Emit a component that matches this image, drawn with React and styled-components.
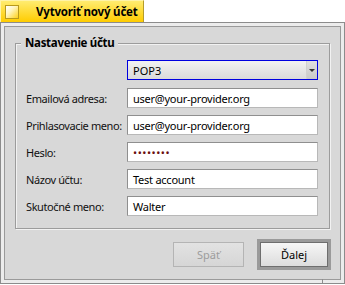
import React from 'react'
import styled, { createGlobalStyle } from 'styled-components'

const GlobalStyle = createGlobalStyle`
  html, body {
    margin: 0;
    padding: 0;
    background: #ffffff;
  }
  body {
    font-family: "Noto Sans", "DejaVu Sans", sans-serif;
    font-size: 11px;
    color: #000;
  }
`

const Page = styled.div`
  width: 345px;
  height: 285px;
  display: flex;
  flex-direction: column;
`

const Tab = styled.div`
  width: 144px;
  height: 22px;
  box-sizing: border-box;
  border: 1px solid #b59c2a;
  border-bottom: none;
  border-left-color: #fff3a8;
  border-top-color: #fff3a8;
  background: linear-gradient(#ffec70, #ffcc00);
  display: flex;
  align-items: center;
  padding-left: 4px;
  gap: 17px;
  white-space: nowrap;
`

const CloseBox = styled.div`
  width: 14px;
  height: 14px;
  flex: none;
  box-sizing: border-box;
  border: 1px solid #b89a1c;
  background: linear-gradient(135deg, #ffffff 0%, #fff6c0 40%, #ffd21a 100%);
`

const TabTitle = styled.span`
  font-weight: bold;
  font-size: 11.5px;
  letter-spacing: -0.2px;
`

const Frame = styled.div`
  flex: 1;
  position: relative;
  box-sizing: border-box;
  border: 1px solid #8c8c8c;
  background: #ececec;
  padding: 3px;
  margin-bottom: 1px;
  display: flex;

  &::after {
    content: '';
    position: absolute;
    right: 21px;
    bottom: -1px;
    width: 1px;
    height: 5px;
    background: #8c8c8c;
  }
`

const Content = styled.div`
  flex: 1;
  box-sizing: border-box;
  border: 1px solid #9a9a9a;
  background: #d8d8d8;
  padding: 16px 9px 9px 10px;
  display: flex;
  flex-direction: column;
`

const Group = styled.div`
  border: 1px solid #9c9c9c;
  box-shadow: 1px 1px 0 #f2f2f2 inset, 1px 1px 0 #f2f2f2;
  padding: 16px 11px 12px 10px;
  height: 186px;
  box-sizing: border-box;
  position: relative;
  margin-right: 1px;
`

const Legend = styled.span`
  position: absolute;
  top: -8px;
  left: 5px;
  padding: 0 4px;
  background: #d8d8d8;
  font-weight: bold;
  font-size: 11.5px;
  line-height: 14px;
  letter-spacing: -0.3px;
`

const Grid = styled.div`
  display: grid;
  grid-template-columns: 101px 1fr;
  row-gap: 7px;
  align-items: center;
`

const Label = styled.label`
  font-size: 11px;
  color: #111;
  white-space: nowrap;
  letter-spacing: -0.4px;
`

const Popup = styled.div`
  grid-column: 2;
  height: 20px;
  box-sizing: border-box;
  border: 1px solid #0000e0;
  background: linear-gradient(#f2f2f2, #dadada);
  display: flex;
  align-items: stretch;
  margin-bottom: 1px;
`

const PopupText = styled.span`
  flex: 1;
  padding-left: 5px;
  display: flex;
  align-items: center;
  font-size: 11px;
`

const PopupArrow = styled.span`
  width: 10px;
  background: linear-gradient(#e0e0e0, #c8c8c8);
  border-left: 1px solid #d0d0d0;
  display: flex;
  align-items: center;
  justify-content: center;

  &::before {
    content: '';
    border-left: 3px solid transparent;
    border-right: 3px solid transparent;
    border-top: 3px solid #333;
  }
`

const Field = styled.div`
  height: 20px;
  box-sizing: border-box;
  border: 1px solid #8f8f8f;
  border-right-color: #b8b8b8;
  border-bottom-color: #b8b8b8;
  background: #ffffff;
  padding-left: 5px;
  display: flex;
  align-items: center;
  font-size: 11px;
  white-space: nowrap;
  color: ${p => (p.$secret ? '#6b1010' : '#000')};
  letter-spacing: ${p => (p.$secret ? '0.5px' : '-0.25px')};
`

const Buttons = styled.div`
  margin-top: auto;
  display: flex;
  justify-content: flex-end;
  align-items: center;
  gap: 13px;
`

const Button = styled.button`
  width: ${p => p.$w}px;
  height: 25px;
  box-sizing: border-box;
  font-family: inherit;
  font-size: 11px;
  padding: 0;
  border: 1px solid ${p => (p.disabled ? '#b4b4b4' : '#6e6e6e')};
  color: ${p => (p.disabled ? '#9c9c9c' : '#000')};
  background: ${p =>
    p.disabled
      ? 'linear-gradient(#e2e2e2, #d6d6d6)'
      : 'linear-gradient(#f6f6f6, #dcdcdc)'};
`

const DefaultRing = styled.div`
  padding: 3px;
  background: #9a9a9a;
  display: flex;
`

export default function App() {
  return (
    <>
      <GlobalStyle />
      <Page>
        <Tab>
          <CloseBox />
          <TabTitle>Vytvoriť nový účet</TabTitle>
        </Tab>
        <Frame>
          <Content>
            <Group>
              <Legend>Nastavenie účtu</Legend>
              <Grid>
                <Popup>
                  <PopupText>POP3</PopupText>
                  <PopupArrow />
                </Popup>
                <Label>Emailová adresa:</Label>
                <Field>user@your-provider.org</Field>
                <Label>Prihlasovacie meno:</Label>
                <Field>user@your-provider.org</Field>
                <Label>Heslo:</Label>
                <Field $secret>••••••••</Field>
                <Label>Názov účtu:</Label>
                <Field>Test account</Field>
                <Label>Skutočné meno:</Label>
                <Field>Walter</Field>
              </Grid>
            </Group>
            <Buttons>
              <Button $w={71} disabled>Späť</Button>
              <DefaultRing>
                <Button $w={68}>Ďalej</Button>
              </DefaultRing>
            </Buttons>
          </Content>
        </Frame>
      </Page>
    </>
  )
}
